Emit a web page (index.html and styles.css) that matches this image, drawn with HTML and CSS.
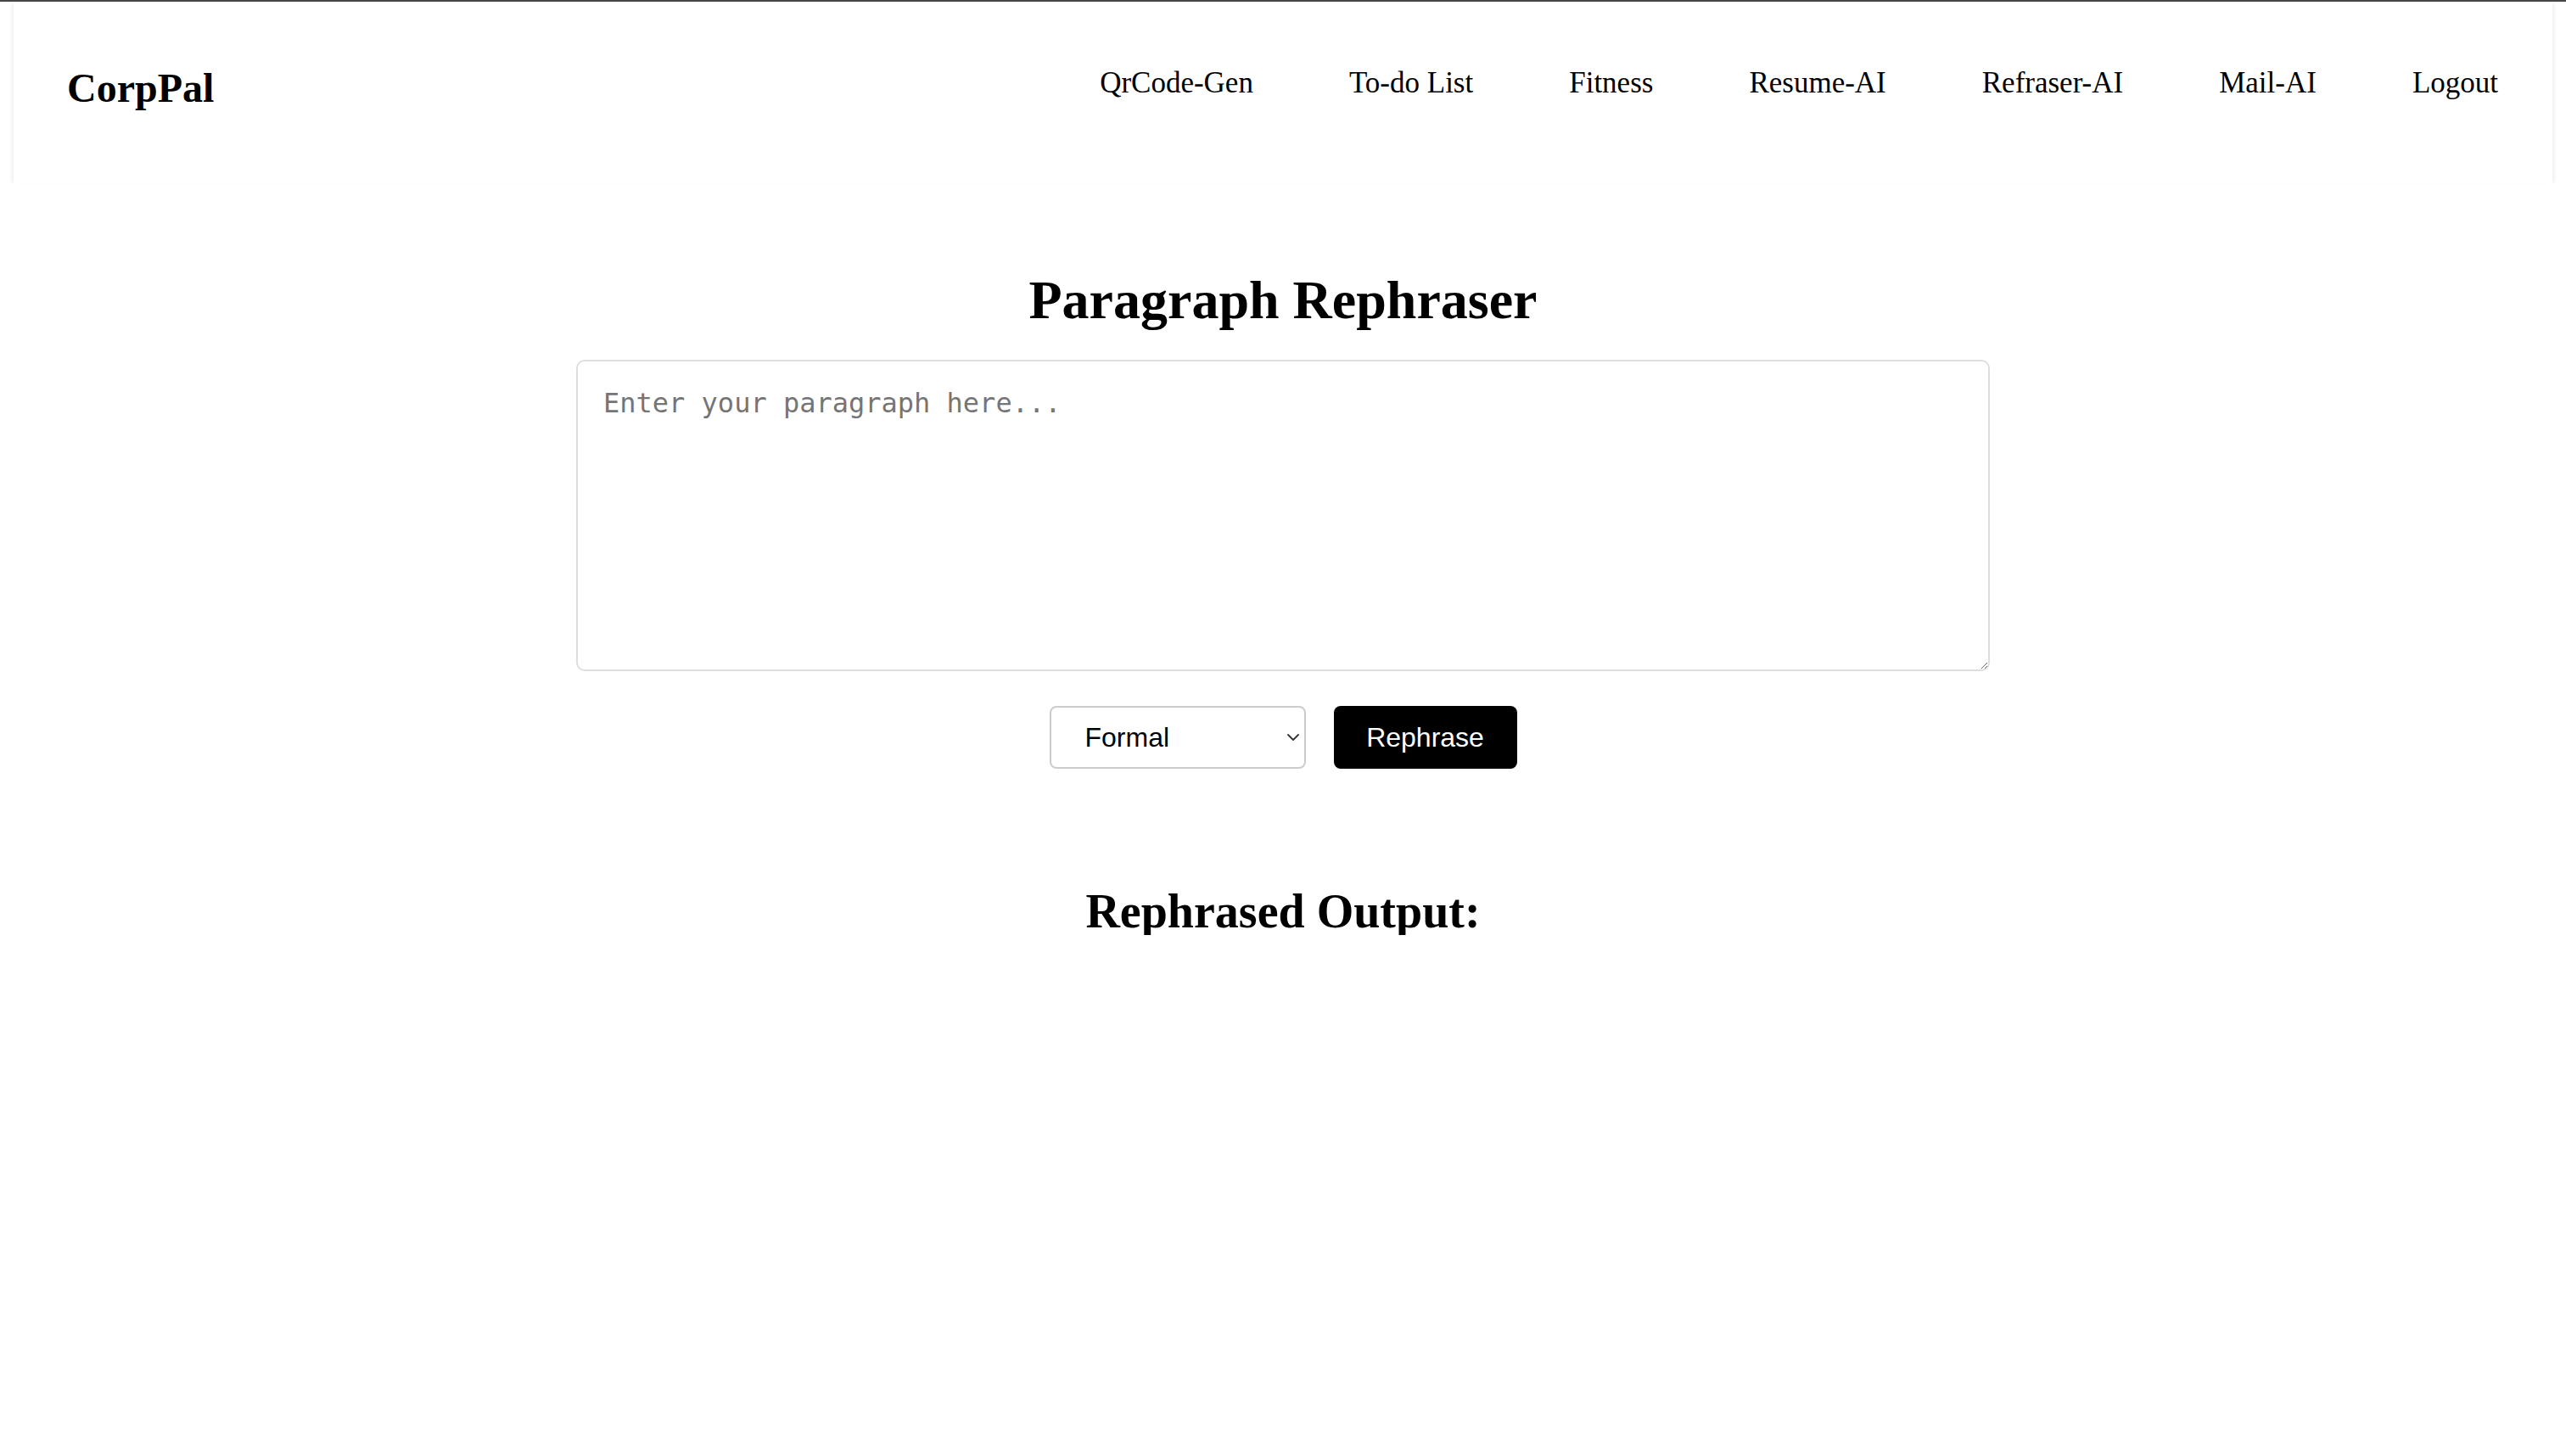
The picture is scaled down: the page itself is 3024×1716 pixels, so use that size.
FILE: index.html
```html
<!DOCTYPE html>
<html lang="en">
<head>
<meta charset="utf-8">
<title>CorpPal - Paragraph Rephraser</title>
<link rel="stylesheet" href="styles.css">
</head>
<body>
<div class="topline"></div>
<div class="page">
  <nav class="navbar">
    <div class="logo">CorpPal</div>
    <ul class="nav-links">
      <li><a href="#">QrCode-Gen</a></li>
      <li><a href="#">To-do List</a></li>
      <li><a href="#">Fitness</a></li>
      <li><a href="#">Resume-AI</a></li>
      <li><a href="#">Refraser-AI</a></li>
      <li><a href="#">Mail-AI</a></li>
      <li><a href="#">Logout</a></li>
    </ul>
  </nav>
  <main class="main">
    <h1 class="title">Paragraph Rephraser</h1>
    <textarea class="input" placeholder="Enter your paragraph here..."></textarea>
    <div class="controls">
      <div class="select-wrap">
        <select class="tone">
          <option>Formal</option>
          <option>Casual</option>
          <option>Friendly</option>
        </select>
        <svg class="chevron" width="16" height="10" viewBox="0 0 16 10" aria-hidden="true">
          <path d="M2 2 L8 8 L14 2" fill="none" stroke="#333" stroke-width="1.8" stroke-linecap="round" stroke-linejoin="round"/>
        </svg>
      </div>
      <button class="btn">Rephrase</button>
    </div>
    <h2 class="output-title">Rephrased Output:</h2>
  </main>
</div>
</body>
</html>
```

FILE: styles.css
```css
* {
  box-sizing: border-box;
}

html, body {
  margin: 0;
  padding: 0;
  background: #ffffff;
}

body {
  font-family: "Liberation Serif", "Times New Roman", serif;
  color: #000;
}

.topline {
  height: 2px;
  background: #474747;
}

.page {
  padding: 0 16px;
}

.navbar {
  height: 215px;
  display: flex;
  justify-content: space-between;
  align-items: flex-start;
  padding: 78px 64px 0 63px;
  background: #fff;
  box-shadow: -4px 0 4px -2px rgba(0, 0, 0, 0.07), 4px 0 4px -2px rgba(0, 0, 0, 0.07);
}

.logo {
  font-size: 48px;
  font-weight: bold;
  line-height: 1;
}

.nav-links {
  display: flex;
  gap: 113px;
  list-style: none;
  margin: 0;
  padding: 0;
}

.nav-links a {
  display: block;
  font-size: 35px;
  line-height: 1;
  color: #000;
  text-decoration: none;
}

.main {
  display: flex;
  flex-direction: column;
  align-items: center;
  padding-top: 105px;
}

.title {
  margin: 0;
  font-size: 64px;
  font-weight: bold;
  line-height: 1;
}

.input {
  display: block;
  margin-top: 38px;
  width: 1666px;
  height: 367px;
  padding: 30px;
  border: 2px solid #dedede;
  border-radius: 10px;
  font-family: "DejaVu Sans Mono", "Liberation Mono", monospace;
  font-size: 32px;
  color: #000;
  resize: vertical;
  outline: none;
}

.input::placeholder {
  color: #757575;
}

.controls {
  display: flex;
  gap: 33px;
  margin-top: 41px;
}

.select-wrap {
  position: relative;
}

.tone {
  appearance: none;
  -webkit-appearance: none;
  width: 302px;
  height: 74px;
  padding: 0 40px 0 40px;
  border: 2px solid #cccccc;
  border-radius: 8px;
  background: #fff;
  font-family: "Liberation Sans", Arial, sans-serif;
  font-size: 32px;
  color: #000;
  outline: none;
}

.chevron {
  position: absolute;
  right: 7px;
  top: 32px;
  width: 16px;
  height: 10px;
  pointer-events: none;
}

.btn {
  height: 74px;
  width: 216px;
  padding: 0;
  border: none;
  border-radius: 8px;
  background: #000;
  color: #fff;
  font-family: "Liberation Sans", Arial, sans-serif;
  font-size: 32px;
  cursor: pointer;
}

.output-title {
  margin: 140px 0 0;
  font-size: 56px;
  font-weight: bold;
  line-height: 1;
}
```
